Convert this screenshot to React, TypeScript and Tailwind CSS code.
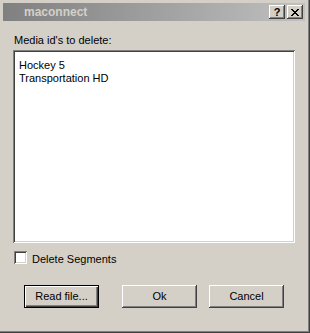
import React from "react";

const raised =
  "shadow-[inset_-1px_-1px_#404040,inset_1px_1px_#ffffff,inset_-2px_-2px_#808080,inset_2px_2px_#d4d0c8]";
const sunken =
  "shadow-[inset_1px_1px_#808080,inset_-1px_-1px_#ffffff,inset_2px_2px_#404040,inset_-2px_-2px_#d4d0c8]";

function CaptionButton({ children }: { children: React.ReactNode }) {
  return (
    <div
      className={`w-[16px] h-[14px] bg-[#d4d0c8] flex items-center justify-center ${raised}`}
    >
      {children}
    </div>
  );
}

function Button({ label, isDefault }: { label: string; isDefault?: boolean }) {
  return (
    <div
      className={`w-[75px] h-[23px] bg-[#d4d0c8] flex items-center justify-center text-black leading-[13px] ${
        isDefault
          ? "border border-black shadow-[inset_1px_1px_#ffffff,inset_-1px_-1px_#404040,inset_-2px_-2px_#808080]"
          : raised
      }`}
    >
      {label}
    </div>
  );
}

export default function App() {
  return (
    <div
      className="w-[310px] h-[333px] bg-[#d4d0c8] overflow-hidden text-[11px] text-black shadow-[inset_-1px_-1px_#404040,inset_-2px_-2px_#808080]"
      style={{ fontFamily: '"Liberation Sans", Arial, sans-serif' }}
    >
      <div className="mt-[3px] ml-[3px] w-[302px] h-[18px] bg-gradient-to-r from-[#808080] to-[#c0c0c0] flex items-center pr-[2px]">
        <span className="pl-[21px] font-bold text-[12px] leading-[14px] text-[#d4d0c8]">
          maconnect
        </span>
        <div className="ml-auto flex gap-[2px]">
          <CaptionButton>
            <span className="font-bold text-[11px] leading-[11px] text-black mt-[1px]">?</span>
          </CaptionButton>
          <CaptionButton>
            <svg width="8" height="7" viewBox="0 0 8 7" shapeRendering="crispEdges">
              <path
                d="M0 0h2v1H0zM6 0h2v1H6zM1 1h2v1H1zM5 1h2v1H5zM2 2h4v1H2zM3 3h2v1H3zM2 4h4v1H2zM1 5h2v1H1zM5 5h2v1H5zM0 6h2v1H0zM6 6h2v1H6z"
                fill="#000"
              />
            </svg>
          </CaptionButton>
        </div>
      </div>

      <div className="flex flex-col pl-[13px]">
        <div className="mt-[13px] pl-px leading-[13px]">Media id's to delete:</div>
        <div
          className={`mt-[3px] w-[282px] h-[193px] bg-white pt-[9px] pl-[6px] leading-[13px] ${sunken}`}
        >
          <div>Hockey 5</div>
          <div>Transportation HD</div>
        </div>
        <div className="mt-[8px] ml-px flex items-start h-[13px]">
          <div className={`w-[13px] h-[13px] bg-white ${sunken}`} />
          <span className="ml-[5px] mt-[2px] leading-[13px]">Delete Segments</span>
        </div>
        <div className="mt-[21px] pl-[11px] flex">
          <Button label="Read file..." isDefault />
          <div className="ml-[23px]">
            <Button label="Ok" />
          </div>
          <div className="ml-[12px]">
            <Button label="Cancel" />
          </div>
        </div>
      </div>
    </div>
  );
}
